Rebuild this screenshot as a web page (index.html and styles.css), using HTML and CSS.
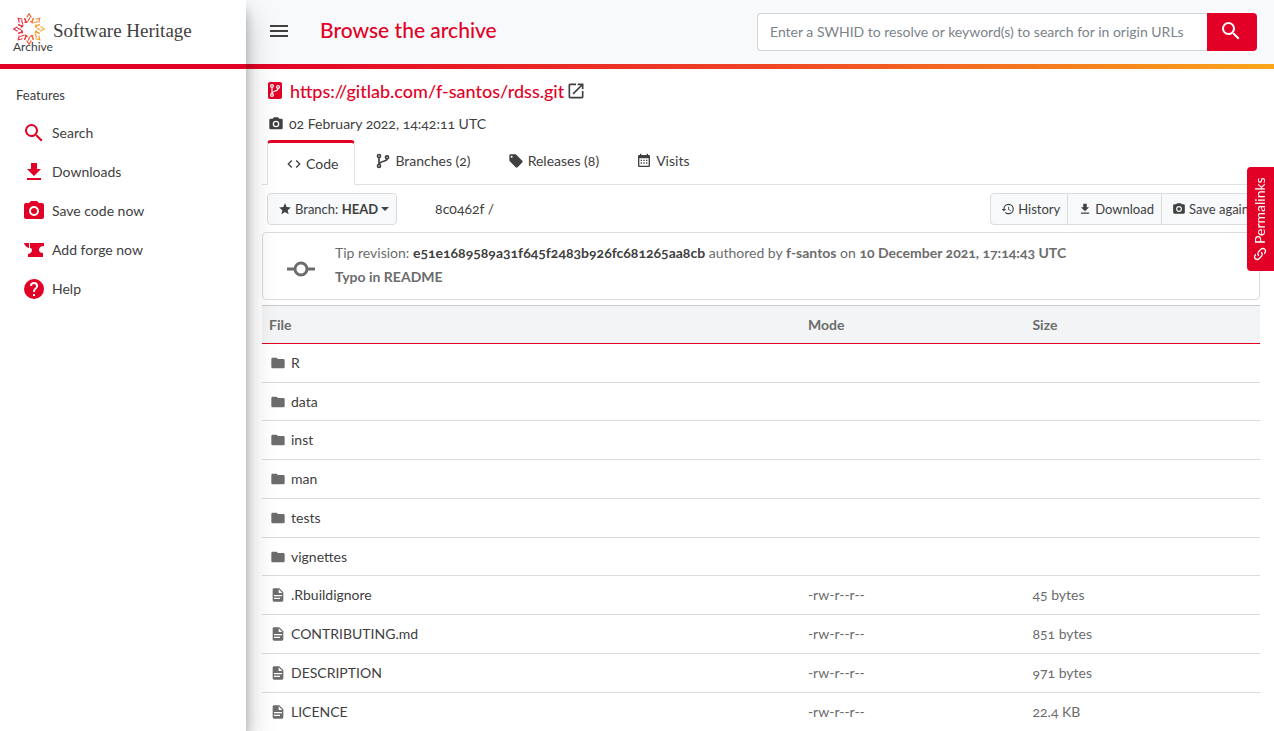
FILE: index.html
```html
<!DOCTYPE html>
<html lang="en">
<head>
<meta charset="utf-8">
<title>Browse the archive – Software Heritage</title>
<link rel="stylesheet" href="styles.css">
</head>
<body>
<svg class="sprite" aria-hidden="true">
  <symbol id="search" viewBox="0 0 24 24"><path d="M9.5,3A6.5,6.5 0 0,1 16,9.5C16,11.11 15.41,12.59 14.44,13.73L14.71,14H15.5L20.5,19L19,20.5L14,15.5V14.71L13.73,14.44C12.59,15.41 11.11,16 9.5,16A6.5,6.5 0 0,1 3,9.5A6.5,6.5 0 0,1 9.5,3M9.5,5C7,5 5,7 5,9.5C5,12 7,14 9.5,14C12,14 14,12 14,9.5C14,7 12,5 9.5,5Z"/></symbol>
  <symbol id="download" viewBox="0 0 24 24"><path d="M5,20H19V18H5M19,9H15V3H9V9H5L12,16L19,9Z"/></symbol>
  <symbol id="camera" viewBox="0 0 24 24"><path d="M4,4H7L9,2H15L17,4H20A2,2 0 0,1 22,6V18A2,2 0 0,1 20,20H4A2,2 0 0,1 2,18V6A2,2 0 0,1 4,4M12,7A5,5 0 0,0 7,12A5,5 0 0,0 12,17A5,5 0 0,0 17,12A5,5 0 0,0 12,7M12,9A3,3 0 0,1 15,12A3,3 0 0,1 12,15A3,3 0 0,1 9,12A3,3 0 0,1 12,9Z"/></symbol>
  <symbol id="anvil" viewBox="0 0 24 24"><path d="M2 5H7V10C4.500 9.500 2.500 7.500 2 5ZM8 5H22V8C19 8 17 9.500 17 12C17 14 18.500 15 21 15V19H6V16C8.500 15.500 10 14 10 12C10 11 9.500 10.200 8 10Z"/></symbol>
  <symbol id="help" viewBox="0 0 24 24"><path d="M15.07,11.25L14.17,12.17C13.45,12.89 13,13.5 13,15H11V14.5C11,13.39 11.45,12.39 12.17,11.67L13.41,10.41C13.78,10.05 14,9.55 14,9C14,7.89 13.1,7 12,7A2,2 0 0,0 10,9H8A4,4 0 0,1 12,5A4,4 0 0,1 16,9C16,9.88 15.64,10.67 15.07,11.25M13,19H11V17H13M12,2A10,10 0 0,0 2,12A10,10 0 0,0 12,22A10,10 0 0,0 22,12C22,6.47 17.5,2 12,2Z"/></symbol>
  <symbol id="open" viewBox="0 0 24 24"><path d="M14,3V5H17.59L7.76,14.83L9.17,16.24L19,6.41V10H21V3M19,19H5V5H12V3H5C3.89,3 3,3.9 3,5V19A2,2 0 0,0 5,21H19A2,2 0 0,0 21,19V12H19V19Z"/></symbol>
  <symbol id="code" viewBox="0 0 24 24"><path d="M14.6,16.6L19.2,12L14.6,7.4L16,6L22,12L16,18L14.6,16.6M9.4,16.6L4.8,12L9.4,7.4L8,6L2,12L8,18L9.4,16.6Z"/></symbol>
  <symbol id="branch" viewBox="0 0 24 24"><g fill="none" stroke="currentColor" stroke-width="2.500"><circle cx="6" cy="4.500" r="2.300"/><circle cx="6" cy="19.500" r="2.300"/><circle cx="18" cy="6.500" r="2.300"/><path d="M6 7V17M18 9C18 13.500 7 11 6.500 17"/></g></symbol>
  <symbol id="tag" viewBox="0 0 24 24"><path d="M5.5,7A1.5,1.5 0 0,1 4,5.5A1.5,1.5 0 0,1 5.5,4A1.5,1.5 0 0,1 7,5.5A1.5,1.5 0 0,1 5.5,7M21.41,11.58L12.41,2.58C12.05,2.22 11.55,2 11,2H4C2.89,2 2,2.89 2,4V11C2,11.55 2.22,12.05 2.59,12.41L11.58,21.41C11.95,21.77 12.45,22 13,22C13.55,22 14.05,21.77 14.41,21.41L21.41,14.41C21.78,14.05 22,13.55 22,13C22,12.44 21.77,11.94 21.41,11.58Z"/></symbol>
  <symbol id="calendar" viewBox="0 0 24 24"><path fill-rule="evenodd" d="M6 1H8V3H16V1H18V3H19A2 2 0 0 1 21 5V19A2 2 0 0 1 19 21H5A2 2 0 0 1 3 19V5A2 2 0 0 1 5 3H6ZM5 8V19H19V8ZM7 10H9V12H7ZM11 10H13V12H11ZM15 10H17V12H15ZM7 14H9V16H7ZM11 14H13V16H11ZM15 14H17V16H15Z"/></symbol>
  <symbol id="star" viewBox="0 0 24 24"><path d="M12,17.27L18.18,21L16.54,13.97L22,9.24L14.81,8.62L12,2L9.19,8.62L2,9.24L7.45,13.97L5.82,21L12,17.27Z"/></symbol>
  <symbol id="history" viewBox="0 0 24 24"><path d="M13.5,8H12V13L16.28,15.54L17,14.33L13.5,12.25V8M13,3A9,9 0 0,0 4,12H1L4.96,16.03L9,12H6A7,7 0 0,1 13,5A7,7 0 0,1 20,12A7,7 0 0,1 13,19C11.07,19 9.32,18.21 8.06,16.94L6.64,18.36C8.27,20 10.5,21 13,21A9,9 0 0,0 22,12A9,9 0 0,0 13,3"/></symbol>
  <symbol id="folder" viewBox="0 0 24 24"><path d="M10,4H4C2.89,4 2,4.89 2,6V18A2,2 0 0,0 4,20H20A2,2 0 0,0 22,18V8C22,6.89 21.1,6 20,6H12L10,4Z"/></symbol>
  <symbol id="file" viewBox="0 0 24 24"><path d="M13,9H18.5L13,3.5V9M6,2H14L20,8V20A2,2 0 0,1 18,22H6C4.89,22 4,21.1 4,20V4C4,2.89 4.89,2 6,2M15,18V16H6V18H15M18,14V12H6V14H18Z"/></symbol>
  <symbol id="link" viewBox="0 0 24 24"><path d="M10.59,13.41C11,13.8 11,14.44 10.59,14.83C10.2,15.22 9.56,15.22 9.17,14.83C7.22,12.88 7.22,9.71 9.17,7.76V7.76L12.71,4.22C14.66,2.27 17.83,2.27 19.78,4.22C21.73,6.17 21.73,9.34 19.78,11.29L18.29,12.78C18.3,11.96 18.17,11.14 17.89,10.36L18.36,9.88C19.54,8.71 19.54,6.81 18.36,5.64C17.19,4.46 15.29,4.46 14.12,5.64L10.59,9.17C9.41,10.34 9.41,12.24 10.59,13.41M13.41,9.17C13.8,8.78 14.44,8.78 14.83,9.17C16.78,11.12 16.78,14.29 14.83,16.24V16.24L11.29,19.78C9.34,21.73 6.17,21.73 4.22,19.78C2.27,17.83 2.27,14.66 4.22,12.71L5.71,11.22C5.7,12.04 5.83,12.86 6.11,13.65L5.64,14.12C4.46,15.29 4.46,17.19 5.64,18.36C6.81,19.54 8.71,19.54 9.88,18.36L13.41,14.83C14.59,13.66 14.59,11.76 13.41,10.59C13,10.2 13,9.56 13.41,9.17Z"/></symbol>
</svg>

<div class="layout">
  <aside class="sidebar">
    <a class="brand" href="#">
      <span class="brand-mark">
        <svg class="brand-logo" viewBox="-16 -16 32 32" aria-hidden="true">
          <defs>
            <g id="ray" fill="none" stroke-width="1.200"><path d="M-2.300 -11.500L0 -15.200L2.300 -11.500M-.800 -8L.900 -11.500M-4.300 -10.800L-3 -6.500L-1 -7.500M4.300 -10.800L3 -6.500L1.500 -8"/></g>
          </defs>
          <use href="#ray" stroke="#ef5a3c"/>
          <use href="#ray" stroke="#f58a3c" transform="rotate(45)"/>
          <use href="#ray" stroke="#fbb042" transform="rotate(90)"/>
          <use href="#ray" stroke="#f79a3e" transform="rotate(135)"/>
          <use href="#ray" stroke="#ef5a3c" transform="rotate(180)"/>
          <use href="#ray" stroke="#e63946" transform="rotate(225)"/>
          <use href="#ray" stroke="#e5304a" transform="rotate(270)"/>
          <use href="#ray" stroke="#e63946" transform="rotate(315)"/>
        </svg>
        <span class="brand-sub">Archive</span>
      </span>
      <span class="brand-name">Software Heritage</span>
    </a>
    <nav class="menu" aria-label="Features">
      <h2 class="menu-title">Features</h2>
      <a class="menu-item" href="#"><svg class="icon-lg"><use href="#search"/></svg>Search</a>
      <a class="menu-item" href="#"><svg class="icon-lg"><use href="#download"/></svg>Downloads</a>
      <a class="menu-item" href="#"><svg class="icon-lg"><use href="#camera"/></svg>Save code now</a>
      <a class="menu-item" href="#"><svg class="icon-lg"><use href="#anvil"/></svg>Add forge now</a>
      <a class="menu-item" href="#"><svg class="icon-lg"><use href="#help"/></svg>Help</a>
    </nav>
  </aside>

  <div class="page">
    <header class="topbar">
      <button class="burger" type="button" aria-label="Toggle menu"><svg class="burger-icon" viewBox="0 0 18 12"><path d="M0 1H18M0 6H18M0 11H18" stroke="currentColor" stroke-width="2"/></svg></button>
      <h1 class="page-title">Browse the archive</h1>
      <form class="search">
        <input class="search-input" type="text" aria-label="Search origins" placeholder="Enter a SWHID to resolve or keyword(s) to search for in origin URLs">
        <button class="search-button" type="button" aria-label="Search"><svg class="icon-lg"><use href="#search"/></svg></button>
      </form>
    </header>

    <main class="content">
      <div class="origin">
        <svg class="origin-icon" viewBox="0 0 14 18" aria-hidden="true"><rect width="14" height="17" rx="2" fill="#e20026"/><g fill="none" stroke="#fff" stroke-width="1.200"><circle cx="4" cy="4" r="1.400"/><circle cx="4" cy="13" r="1.400"/><circle cx="10" cy="5" r="1.400"/><path d="M4 5.400V11.600M10 6.400C10 10 4.500 8 4 11.600"/></g></svg>
        <a class="origin-link" href="#">https://gitlab.com/f-santos/rdss.git</a>
        <a class="origin-open" href="#" aria-label="Open origin"><svg class="icon-md"><use href="#open"/></svg></a>
      </div>
      <a class="visit-date" href="#"><svg class="icon"><use href="#camera"/></svg>02 February 2022, 14:42:11 UTC</a>

      <nav class="tabs">
        <a class="tab tab-active" href="#"><svg class="icon"><use href="#code"/></svg>Code</a>
        <a class="tab" href="#"><svg class="icon"><use href="#branch"/></svg>Branches (2)</a>
        <a class="tab" href="#"><svg class="icon"><use href="#tag"/></svg>Releases (8)</a>
        <a class="tab" href="#"><svg class="icon"><use href="#calendar"/></svg>Visits</a>
      </nav>

      <div class="toolbar">
        <button class="branch-button" type="button"><svg class="icon-sm"><use href="#star"/></svg><span>Branch: <b>HEAD</b></span><span class="caret"></span></button>
        <div class="path"><a class="path-link" href="#">8c0462f</a> /</div>
        <div class="actions">
          <button class="action" type="button"><svg class="icon-sm"><use href="#history"/></svg>History</button>
          <button class="action" type="button"><svg class="icon-sm"><use href="#download"/></svg>Download</button>
          <button class="action" type="button"><svg class="icon-sm"><use href="#camera"/></svg>Save again</button>
        </div>
      </div>

      <section class="revision">
        <svg class="commit-icon" viewBox="0 0 28 16" aria-hidden="true"><g fill="none" stroke="currentColor" stroke-width="3"><circle cx="14" cy="8" r="6"/><path d="M0 8H8M20 8H28"/></g></svg>
        <div>
          <div>Tip revision: <a class="hash" href="#">e51e1689589a31f645f2483b926fc681265aa8cb</a> authored by <b>f-santos</b> on <b>10 December 2021, 17:14:43 UTC</b></div>
          <div><b>Typo in README</b></div>
        </div>
      </section>

      <table class="files">
        <thead><tr><th class="col-file">File</th><th class="col-mode">Mode</th><th>Size</th></tr></thead>
        <tbody>
          <tr><td><a class="entry" href="#"><svg class="icon"><use href="#folder"/></svg>R</a></td><td></td><td></td></tr>
          <tr><td><a class="entry" href="#"><svg class="icon"><use href="#folder"/></svg>data</a></td><td></td><td></td></tr>
          <tr><td><a class="entry" href="#"><svg class="icon"><use href="#folder"/></svg>inst</a></td><td></td><td></td></tr>
          <tr><td><a class="entry" href="#"><svg class="icon"><use href="#folder"/></svg>man</a></td><td></td><td></td></tr>
          <tr><td><a class="entry" href="#"><svg class="icon"><use href="#folder"/></svg>tests</a></td><td></td><td></td></tr>
          <tr><td><a class="entry" href="#"><svg class="icon"><use href="#folder"/></svg>vignettes</a></td><td></td><td></td></tr>
          <tr><td><a class="entry" href="#"><svg class="icon"><use href="#file"/></svg>.Rbuildignore</a></td><td>-rw-r--r--</td><td>45 bytes</td></tr>
          <tr><td><a class="entry" href="#"><svg class="icon"><use href="#file"/></svg>CONTRIBUTING.md</a></td><td>-rw-r--r--</td><td>851 bytes</td></tr>
          <tr><td><a class="entry" href="#"><svg class="icon"><use href="#file"/></svg>DESCRIPTION</a></td><td>-rw-r--r--</td><td>971 bytes</td></tr>
          <tr><td><a class="entry" href="#"><svg class="icon"><use href="#file"/></svg>LICENCE</a></td><td>-rw-r--r--</td><td>22.4 KB</td></tr>
        </tbody>
      </table>
    </main>
  </div>
</div>
<button class="permalinks" type="button"><svg class="icon"><use href="#link"/></svg>Permalinks</button>
</body>
</html>
```
FILE: styles.css
```css
:root {
  --red: #e20026;
  --text: #404040;
  --muted: #6c6c6c;
  --line: #dcdcdc;
  --soft: #f7f9fb;
}

* { box-sizing: border-box; }

body {
  margin: 0;
  background: #fff;
  color: var(--text);
  font: 14px/24px Lato, "Open Sans", sans-serif;
  font-variant-numeric: oldstyle-nums;
}

a { color: inherit; text-decoration: none; }
button, input { font: inherit; color: inherit; }
svg { fill: currentColor; flex: none; }

.sprite { display: none; }
.icon { width: 16px; height: 16px; }
.icon-sm { width: 14px; height: 14px; }
.icon-md { width: 20px; height: 20px; }
.icon-lg { width: 24px; height: 24px; }

.layout {
  display: flex;
  height: 100vh;
  overflow: hidden;
}

.sidebar {
  flex: 0 0 246px;
  z-index: 1;
  background: #fff;
  box-shadow: 0 14px 28px rgba(0, 0, 0, .25), 0 10px 10px rgba(0, 0, 0, .22);
}

.brand {
  display: flex;
  height: 69px;
  padding: 13px 13px 0;
  gap: 1px;
  border-bottom: 5px solid var(--red);
}

.brand-mark {
  display: flex;
  flex-direction: column;
  width: 39px;
}

.brand-logo { width: 32px; height: 32px; }

.brand-sub {
  margin-top: -5px;
  font-size: 12px;
  line-height: 14px;
}

.brand-name {
  font: 19px/36px "Liberation Serif", serif;
}

.menu { padding: 16px 16px 0; }

.menu-title {
  margin: 0 0 8px;
  font-size: 13px;
  font-weight: 400;
  line-height: 20px;
}

.menu-item {
  display: flex;
  align-items: center;
  gap: 6px;
  height: 39px;
  padding-left: 6px;
}

.menu-item svg { color: var(--red); }

.page { flex: 1; min-width: 0; }

.topbar {
  display: flex;
  align-items: center;
  height: 69px;
  padding: 0 17px 0 24px;
  background: var(--soft);
  border-bottom: 5px solid;
  border-image: linear-gradient(to right, #e20026, #ef4426 50%, #faa61a) 1;
}

.burger {
  display: flex;
  padding: 0 0 2px;
  border: 0;
  background: none;
}

.burger-icon { width: 18px; height: 12px; }

.page-title {
  margin: 0 auto 0 32px;
  padding-bottom: 4px;
  color: var(--red);
  font-size: 21px;
  font-weight: 500;
}

.search { display: flex; flex: 0 1 500px; height: 38px; }

.search-input {
  flex: 1;
  min-width: 0;
  padding: 0 12px;
  border: 1px solid #ced4da;
  border-right: 0;
  border-radius: 4px 0 0 4px;
  background: #fff;
}

.search-input::placeholder { color: #7b838a; opacity: 1; }

.search-button {
  display: grid;
  place-items: center;
  width: 50px;
  padding: 0 2px 2px 0;
  border: 0;
  border-radius: 0 4px 4px 0;
  background: var(--red);
  color: #fff;
}

.content { padding: 8px 14px 0 16px; }

.origin {
  display: flex;
  align-items: center;
  height: 28px;
  padding-left: 6px;
}

.origin-icon { width: 14px; height: 18px; }

.origin-link {
  margin: 0 2px 0 8px;
  color: var(--red);
  font-size: 18px;
  font-weight: 500;
}

.origin-open { display: flex; }

.visit-date {
  display: flex;
  align-items: center;
  gap: 5px;
  padding: 7px 6px 4px;
}

.tabs {
  display: flex;
  height: 45px;
  padding-left: 5px;
  border-bottom: 1px solid #dee2e6;
}

.tab {
  display: flex;
  align-items: center;
  gap: 4px;
  padding: 0 17px 2px 20px;
}

.tab-active {
  height: 45px;
  padding: 0 16px 0 18px;
  border: 1px solid #dee2e6;
  border-top: 3px solid var(--red);
  border-bottom: 0;
  border-radius: 4px 4px 0 0;
  background: #fff;
}

.toolbar {
  display: flex;
  align-items: center;
  height: 47px;
  padding: 0 3px 0 5px;
  font-size: 13px;
}

.branch-button,
.action {
  display: flex;
  align-items: center;
  gap: 3px;
  height: 32px;
  padding: 0 7px 0 10px;
  border: 1px solid var(--line);
  background: var(--soft);
}

.branch-button { border-radius: 4px; }

.caret {
  border: 4px solid transparent;
  border-top-color: currentColor;
  border-bottom: 0;
}

.path { margin-left: 38px; font-size: 14px; }

.actions { display: flex; margin-left: auto; }
.action + .action { border-left: 0; }
.action:first-child { border-radius: 4px 0 0 4px; }
.action:last-child { border-radius: 0 4px 4px 0; }

.revision {
  display: flex;
  align-items: center;
  gap: 20px;
  height: 68px;
  padding: 0 24px 3px;
  border: 1px solid var(--line);
  border-radius: 4px;
  color: var(--muted);
}

.commit-icon { width: 28px; height: 16px; margin-top: 8px; }
.hash { color: var(--text); font-weight: 700; }

.files {
  width: 100%;
  margin-top: 5px;
  border-collapse: collapse;
  table-layout: fixed;
  color: var(--muted);
}

.files th,
.files td {
  height: 39px;
  padding: 0 7px;
  border-top: 1px solid var(--line);
  text-align: left;
}

.files th {
  height: 38px;
  border-top-color: #c8cacc;
  border-bottom: 1px solid var(--red);
  background: #f2f4f5;
}

.files tr:nth-child(4n + 2) td { height: 38px; }

.col-file { width: 54%; }
.col-mode { width: 22.5%; }

.entry {
  display: flex;
  align-items: center;
  gap: 5px;
  padding-left: 1px;
  color: var(--text);
}

.entry svg { color: var(--muted); }

.permalinks {
  position: fixed;
  top: 167px;
  right: 0;
  z-index: 2;
  display: flex;
  align-items: center;
  gap: 2px;
  width: 27px;
  height: 104px;
  padding: 9px 0;
  border: 0;
  border-radius: 0 4px 4px 0;
  background: var(--red);
  color: #fff;
  font-size: 14px;
  writing-mode: vertical-rl;
  transform: rotate(180deg);
}
```
